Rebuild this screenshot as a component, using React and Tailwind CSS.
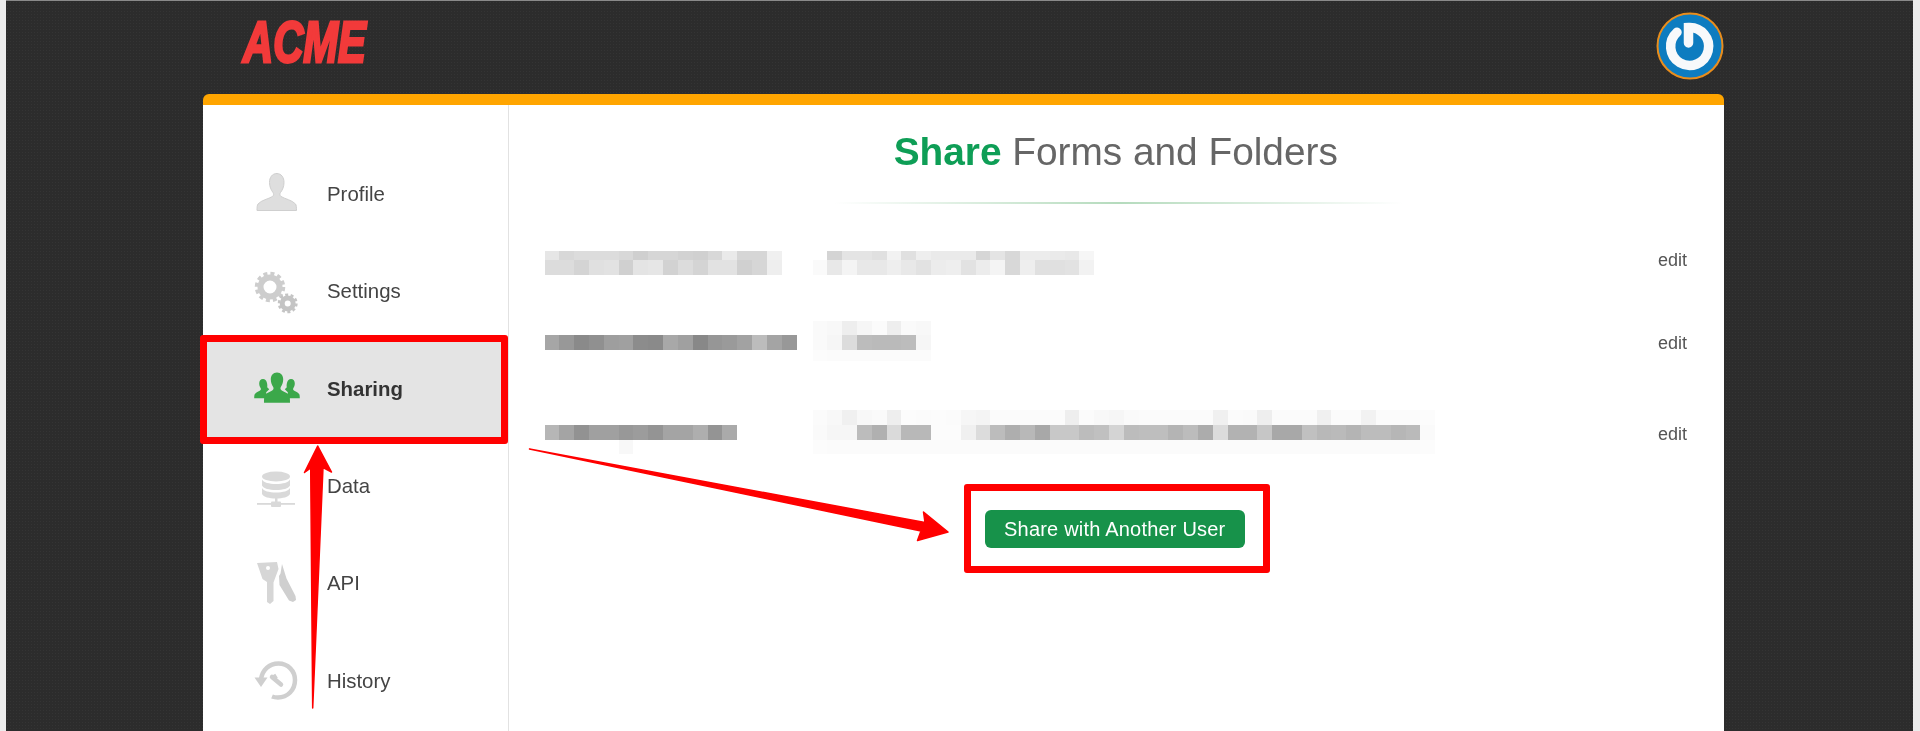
const ROWS = [
  {
    edit: 'mt-[-1px]',
    heights: [9.3, 14.7],
    left: [
      ['e6', 'd8', 'dc', 'dc', 'dc', 'd8', 'cf', 'd6', 'd6', 'd2', 'd0', 'd8', 'ea', 'd6', 'd6', 'f0'],
      ['dc', 'dc', 'd4', 'e0', 'e2', 'd0', 'e4', 'e6', 'd2', 'dc', 'd4', 'e2', 'e2', 'd0', 'd6', 'ee'],
    ],
    right: [
      ['ff', 'd4', 'e4', 'e4', 'e0', 'f2', 'e0', 'ee', 'ea', 'ea', 'ea', 'd6', 'e4', 'd8', 'ec', 'ec', 'ea', 'e8', 'f6'],
      ['fa', 'e8', 'f4', 'e8', 'e8', 'ee', 'e8', 'e2', 'ec', 'ee', 'e2', 'ec', 'f4', 'd8', 'ee', 'e0', 'e0', 'e2', 'f2'],
    ],
  },
  {
    edit: 'mt-[12px]',
    heights: [14.3, 15, 10.7],
    left: [
      [],
      ['a6', '98', '8a', '90', '9e', 'a0', '8c', '8a', 'a8', 'a0', '88', '96', '9a', 'a2', 'bc', 'a4', '98'],
      [],
    ],
    right: [
      ['fa', 'f8', 'ee', 'f6', 'fb', 'ee', 'fa', 'f8'],
      ['fa', 'f6', 'dc', 'bc', 'ba', 'ba', 'bc', 'f6'],
      ['fc', 'fb', 'fb', 'fb', 'fb', 'fb', 'fb', 'fb'],
    ],
  },
  {
    edit: 'mt-[14px]',
    heights: [15, 15, 14],
    left: [
      [],
      ['b6', 'a4', '92', 'a0', 'a0', '98', '9c', '94', 'a4', 'a4', 'ae', '94', 'aa'],
      ['ff', 'ff', 'ff', 'ff', 'ff', 'f8'],
    ],
    right: [
      ['fb', 'f8', 'f0', 'f8', 'fa', 'ee', 'fc', 'fb', 'fc', 'fb', 'f6', 'f4', 'fb', 'fb', 'fb', 'fb', 'fb', 'ee', 'fb', 'f8', 'f6', 'fa', 'fb', 'fb', 'fb', 'fb', 'fb', 'f0', 'fb', 'fa', 'ee', 'fb', 'fb', 'fb', 'f0', 'fb', 'fb', 'f2', 'fb', 'fb', 'fb', 'fc'],
      ['fa', 'f6', 'f6', 'bc', 'b0', 'da', 'b8', 'b8', 'fc', 'fc', 'f0', 'dc', 'bc', 'ae', 'b8', 'a8', 'c8', 'c8', 'bc', 'c0', 'd4', 'bc', 'be', 'be', 'b4', 'bc', 'ac', 'dc', 'b2', 'b2', 'c6', 'a8', 'a8', 'c0', 'b8', 'ba', 'b4', 'bc', 'bc', 'b6', 'ba', 'fa'],
      ['fc', 'fb', 'fb', 'fb', 'fb', 'fb', 'fb', 'fb', 'fb', 'fb', 'fb', 'fb', 'fb', 'fb', 'fb', 'fb', 'fb', 'fb', 'fb', 'fb', 'fb', 'fb', 'fb', 'fb', 'fb', 'fb', 'fb', 'fb', 'fb', 'fb', 'fb', 'fb', 'fb', 'fb', 'fb', 'fb', 'fb', 'fb', 'fb', 'fb', 'fb', 'fc'],
    ],
  },
]

function Mosaic({ heights, strips, className }) {
  return (
    <div className={className}>
      {strips.map((cells, i) => (
        <div key={i} className="flex" style={{ height: heights[i] }}>
          {cells.map((c, j) => (
            <div key={j} className="w-[14.83px] flex-none" style={{ backgroundColor: `#${c}${c}${c}` }} />
          ))}
        </div>
      ))}
    </div>
  )
}

function ProfileIcon() {
  return (
    <svg width="48" height="48" viewBox="0 0 48 48" fill="#dedede" stroke="#cfcfcf" strokeWidth="1">
      <path d="M24 3.5c-5 0-7.5 4-7.5 9 0 4 1.500 7.500 3.500 10 .8 1 .8 3-.5 4-4 2.500-11 3.500-14.500 7.500-.8 1-1 3.500-1 6.500h39.500c0-3-.2-5.500-1-6.500-3.500-4-10.500-5-14.500-7.500-1.300-1-1.300-3-.5-4 2-2.500 3.500-6 3.500-10 0-5-2.500-9-7.500-9z" />
    </svg>
  )
}

function SettingsIcon() {
  return (
    <svg width="48" height="48" viewBox="0 0 48 48" fill="none" stroke="#cdcdcd">
      <circle cx="17" cy="19" r="9.500" strokeWidth="6" />
      <circle cx="17" cy="19" r="13.500" strokeWidth="3.500" strokeDasharray="4 3.070" />
      <circle cx="34.700" cy="35.400" r="5.500" strokeWidth="5" stroke="#c4c4c4" />
      <circle cx="34.700" cy="35.400" r="8.700" strokeWidth="2.500" strokeDasharray="3 2.460" stroke="#c4c4c4" />
    </svg>
  )
}

function SharingIcon() {
  return (
    <svg width="48" height="48" viewBox="0 0 48 48" fill="#3ba84a">
      <path d="M10 14c-2.500 0-3.800 2-3.800 4.500 0 2 .8 3.500 1.500 4.800.5 1 0 2-1 2.500-2 1-4 2-5 3.500-.4.800-.5 2.500-.5 4h12v-6l3-3-2-2c.5-2 0-8.300-4.200-8.300z" />
      <path d="M38 14c2.500 0 3.800 2 3.800 4.500 0 2-.8 3.500-1.500 4.800-.5 1 0 2 1 2.500 2 1 4 2 5 3.500.4.800.5 2.500.5 4h-12v-6l-3-3 2-2c-.5-2-0-8.300 4.200-8.300z" />
      <path d="M24 7.500c-4 0-6.200 3.200-6.200 7 0 3 1.200 5.500 2.400 7.500.7 1.200.3 2.800-1 3.500-3 1.800-6 2.600-7.500 4.800-.6 1-.7 4.500-.7 7.400h26c0-2.900-.1-6.400-.7-7.400-1.500-2.200-4.500-3-7.500-4.800-1.300-.7-1.700-2.300-1-3.500 1.200-2 2.400-4.500 2.400-7.500 0-3.800-2.200-7-6.200-7z" />
    </svg>
  )
}

function DataIcon() {
  return (
    <svg width="48" height="48" viewBox="0 0 48 48" fill="#d9d9d9">
      <ellipse cx="23" cy="14.500" rx="14" ry="5" />
      <path d="M9 17.500c1.500 3 7 4.500 14 4.500s12.500-1.500 14-4.500v6c-1.500 3-7 4.500-14 4.500s-12.500-1.500-14-4.500z" />
      <path d="M9 26c1.500 3 7 4.500 14 4.500s12.500-1.500 14-4.500v6c-1.500 3-7 4.500-14 4.500S10.500 35 9 32z" />
      <rect x="22" y="36" width="2.500" height="5" />
      <rect x="4" y="41" width="38" height="1.800" />
      <rect x="18" y="39.500" width="10" height="5.500" rx="1" />
    </svg>
  )
}

function ApiIcon() {
  return (
    <svg width="48" height="48" viewBox="0 0 48 48" fill="#d6d6d6">
      <path d="M4 3l20-1 1.500 7-5 13.500v18.500l-3.500 3-3-2V22L9.500 19z" />
      <circle cx="15" cy="8" r="2" fill="#fff" />
      <path d="M29 4l4.500 14.500 9 17.500.5 4-3 2-4-1.500-9.500-15.500-.5-9 1.500-2.500z" fill="#cfcfcf" />
    </svg>
  )
}

function HistoryIcon() {
  return (
    <svg width="48" height="48" viewBox="0 0 48 48" fill="none" stroke="#cfcfcf">
      <path d="M8 22c1.500-9 8-15.500 17.500-15.500C35 6.500 42 14 42 23c0 10-7.500 17.500-17 17.500-2.500 0-4.500-.4-6-1" strokeWidth="4.500" />
      <path d="M1.500 20.500h13L8 30z" fill="#cfcfcf" stroke="none" />
      <path d="M19 20l9 7.500" strokeWidth="4.500" strokeLinecap="round" />
      <path d="M21 17.500l2.500 4" strokeWidth="3" />
    </svg>
  )
}

const NAV = [
  { label: 'Profile', Icon: ProfileIcon },
  { label: 'Settings', Icon: SettingsIcon },
  { label: 'Sharing', Icon: SharingIcon, active: true },
  { label: 'Data', Icon: DataIcon },
  { label: 'API', Icon: ApiIcon },
  { label: 'History', Icon: HistoryIcon },
]

export default function App() {
  return (
    <div className="relative h-[731px] overflow-hidden bg-[#ececec] pl-[6px] pr-[7px] blur-[0.4px] font-['Liberation_Sans',Arial,sans-serif]">
      {/* Dark page */}
      <div className="h-full border-t border-[#8a8a8a] bg-[#2c2c2c] bg-[radial-gradient(#343434_1px,transparent_1px)] bg-[length:3px_3px] pl-[197px] pr-[189px]">
        <header className="flex h-[92.700px] items-start justify-between">
          <div className="ml-[40px] mt-[8px] origin-left scale-x-[0.72] text-[58px] leading-[66px] font-bold italic text-[#f23a3a] [-webkit-text-stroke:3px_#f23a3a]">
            ACME
          </div>
          <svg width="68" height="68" viewBox="0 0 68 68" className="mt-[11px]" fill="none">
            <circle cx="34" cy="34" r="32.500" fill="#0d7cc0" stroke="#e98d1c" strokeWidth="2" />
            <path d="M21 20.300A19 19 0 1 0 32.500 15.500V31" stroke="#f7f9fb" strokeWidth="9.500" strokeLinecap="round" />
          </svg>
        </header>

        {/* Main card */}
        <main className="flex h-[640px] rounded-t-[6px] border-t-[11px] border-[#ffa500] bg-white">
          <nav className="w-[305.500px] flex-none border-r-[1.500px] border-[#e2e2e2] pt-[41px]">
            {NAV.map(({ label, Icon, active }) => (
              <div
                key={label}
                className={active
                  ? 'flex h-[97.300px] items-center bg-[#e4e4e4] pl-[50px]'
                  : 'flex h-[97.300px] items-center pl-[50px]'}
              >
                <Icon />
                <span className={active
                  ? 'ml-[26px] text-[20.400px] font-bold text-[#333]'
                  : 'ml-[26px] text-[20.400px] text-[#444]'}
                >
                  {label}
                </span>
              </div>
            ))}
          </nav>

          <section className="flex-1 pl-[36px] pr-[37px]">
            <h1 className="pt-[24px] text-center text-[38.800px] leading-[46px] text-[#666]">
              <span className="font-bold text-[#0e9e56]">Share</span> Forms and Folders
            </h1>
            <div className="ml-[289px] mt-[27px] h-[2px] w-[569px] bg-gradient-to-r from-transparent via-[#b5dbbd] to-transparent" />

            <div className="mt-[47px] flex flex-col">
              {ROWS.map((row, i) => (
                <div
                  key={i}
                  className={i === 0 ? 'flex items-start' : i === 1 ? 'mt-[46px] flex items-start' : 'mt-[49px] flex items-start'}
                >
                  <Mosaic heights={row.heights} strips={row.left} className="w-[268px] flex-none" />
                  <Mosaic heights={row.heights} strips={row.right} className="flex-1" />
                  <span className={`${row.edit} text-[18px] leading-5 text-[#555]`}>edit</span>
                </div>
              ))}
            </div>

            <div className="mt-[56px] flex justify-center">
              <button
                type="button"
                className="ml-[-2px] h-[38.500px] w-[260px] rounded-[6px] bg-[#17924a] text-[20px] tracking-[0.2px] text-white"
              >
                Share with Another User
              </button>
            </div>
          </section>
        </main>
      </div>

      {/* Annotations drawn over the page */}
      <div className="absolute left-[200px] top-[335px] h-[109px] w-[308px] rounded-[3px] border-[7px] border-[#ff0000]" />
      <div className="absolute left-[964px] top-[484px] h-[89px] w-[306px] rounded-[3px] border-[7px] border-[#ff0000]" />
      <svg className="pointer-events-none absolute left-0 top-0" width="1920" height="731" viewBox="0 0 1920 731" fill="#ff0000" stroke="#ff0000" strokeLinejoin="round">
        <path d="M529.500 449L925 522.500 923.500 512 948 532 917.500 540.500 921 531z" strokeWidth="1.500" />
        <path d="M312.700 708L310.700 468 304.500 472.500 317.700 446 331.500 472 323 467.500z" strokeWidth="1.500" />
      </svg>
    </div>
  )
}
